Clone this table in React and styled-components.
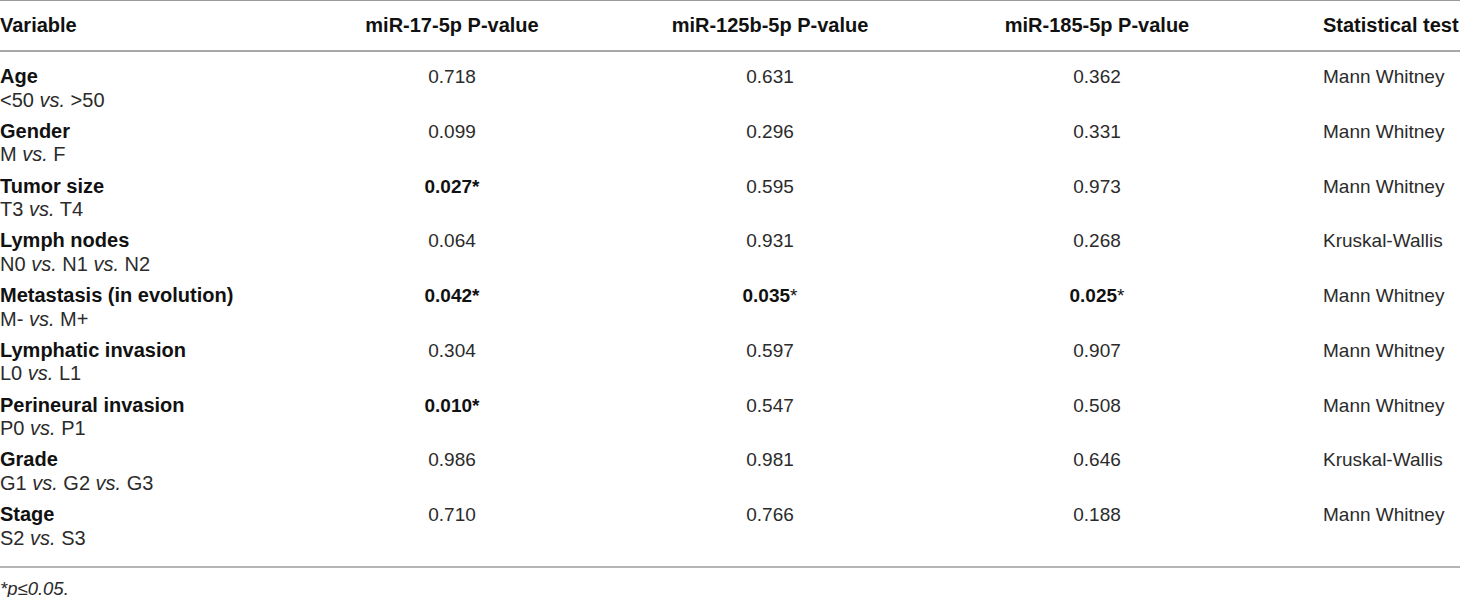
import React from 'react';
import styled, { createGlobalStyle } from 'styled-components';

const GlobalStyle = createGlobalStyle`
  html, body {
    margin: 0;
    padding: 0;
    background: #ffffff;
  }
  body {
    font-family: "Liberation Sans", Arial, Helvetica, sans-serif;
    color: #231f20;
  }
`;

const Table = styled.div`
  width: 1460px;
  border-top: 1px solid #9a9a9a;
`;

const Row = styled.div`
  display: grid;
  grid-template-columns: 290px 324px 312px 342px 1fr;
  align-items: start;
`;

const HeadRow = styled(Row)`
  height: 49px;
  align-items: center;
  border-bottom: 2px solid #a8a8a8;
`;

const Body = styled.div`
  padding: 13px 0 16px;
  border-bottom: 2px solid #b4b4b4;
`;

const BodyRow = styled(Row)`
  font-size: 19px;
  line-height: 23.5px;
  padding-bottom: ${(p) => (p.$last ? '0' : '7.75px')};
`;

const HeadCell = styled.div`
  font-size: 20px;
  font-weight: 700;
  color: #111;
  text-align: ${(p) => (p.$center ? 'center' : 'left')};
  padding-left: ${(p) => (p.$indent ? '55px' : '0')};
  white-space: nowrap;
`;

const LabelCell = styled.div`
  font-size: 20px;
  white-space: nowrap;
`;

const Label = styled.div`
  font-weight: 700;
  color: #111;
`;

const Sub = styled.div`
  color: #2b2b2b;
`;

const ValueCell = styled.div`
  text-align: center;
  color: #2b2b2b;
  font-weight: ${(p) => (p.$bold ? 700 : 400)};
  ${(p) => p.$bold && 'color: #111;'}
`;

const TestCell = styled.div`
  padding-left: 55px;
  color: #2b2b2b;
  white-space: nowrap;
`;

const Star = styled.span`
  font-weight: 400;
`;

const Footnote = styled.div`
  font-size: 18.5px;
  font-style: italic;
  color: #2b2b2b;
  padding-top: 10px;
`;

const rows = [
  { label: 'Age', sub: ['<50 ', 'vs.', ' >50'], v: ['0.718', '0.631', '0.362'], test: 'Mann Whitney' },
  { label: 'Gender', sub: ['M ', 'vs.', ' F'], v: ['0.099', '0.296', '0.331'], test: 'Mann Whitney' },
  { label: 'Tumor size', sub: ['T3 ', 'vs.', ' T4'], v: [{ t: '0.027*', b: true }, '0.595', '0.973'], test: 'Mann Whitney' },
  { label: 'Lymph nodes', sub: ['N0 ', 'vs.', ' N1 ', 'vs.', ' N2'], v: ['0.064', '0.931', '0.268'], test: 'Kruskal-Wallis' },
  {
    label: 'Metastasis (in evolution)',
    sub: ['M- ', 'vs.', ' M+'],
    v: [{ t: '0.042*', b: true }, { t: '0.035', b: true, star: true }, { t: '0.025', b: true, star: true }],
    test: 'Mann Whitney',
  },
  { label: 'Lymphatic invasion', sub: ['L0 ', 'vs.', ' L1'], v: ['0.304', '0.597', '0.907'], test: 'Mann Whitney' },
  { label: 'Perineural invasion', sub: ['P0 ', 'vs.', ' P1'], v: [{ t: '0.010*', b: true }, '0.547', '0.508'], test: 'Mann Whitney' },
  { label: 'Grade', sub: ['G1 ', 'vs.', ' G2 ', 'vs.', ' G3'], v: ['0.986', '0.981', '0.646'], test: 'Kruskal-Wallis' },
  { label: 'Stage', sub: ['S2 ', 'vs.', ' S3'], v: ['0.710', '0.766', '0.188'], test: 'Mann Whitney' },
];

const SubText = ({ parts }) => (
  <Sub>
    {parts.map((p, i) => (i % 2 === 1 ? <em key={i}>{p}</em> : <span key={i}>{p}</span>))}
  </Sub>
);

const Value = ({ value }) => {
  if (typeof value === 'string') return <ValueCell>{value}</ValueCell>;
  return (
    <ValueCell $bold={value.b}>
      {value.t}
      {value.star && <Star>*</Star>}
    </ValueCell>
  );
};

const App = () => (
  <>
    <GlobalStyle />
    <Table>
      <HeadRow>
        <HeadCell>Variable</HeadCell>
        <HeadCell $center>miR-17-5p P-value</HeadCell>
        <HeadCell $center>miR-125b-5p P-value</HeadCell>
        <HeadCell $center>miR-185-5p P-value</HeadCell>
        <HeadCell $indent>Statistical test</HeadCell>
      </HeadRow>
      <Body>
        {rows.map((r, i) => (
          <BodyRow key={r.label} $last={i === rows.length - 1}>
            <LabelCell>
              <Label>{r.label}</Label>
              <SubText parts={r.sub} />
            </LabelCell>
            {r.v.map((v, j) => (
              <Value key={j} value={v} />
            ))}
            <TestCell>{r.test}</TestCell>
          </BodyRow>
        ))}
      </Body>
    </Table>
    <Footnote>*p≤0.05.</Footnote>
  </>
);

export default App;
